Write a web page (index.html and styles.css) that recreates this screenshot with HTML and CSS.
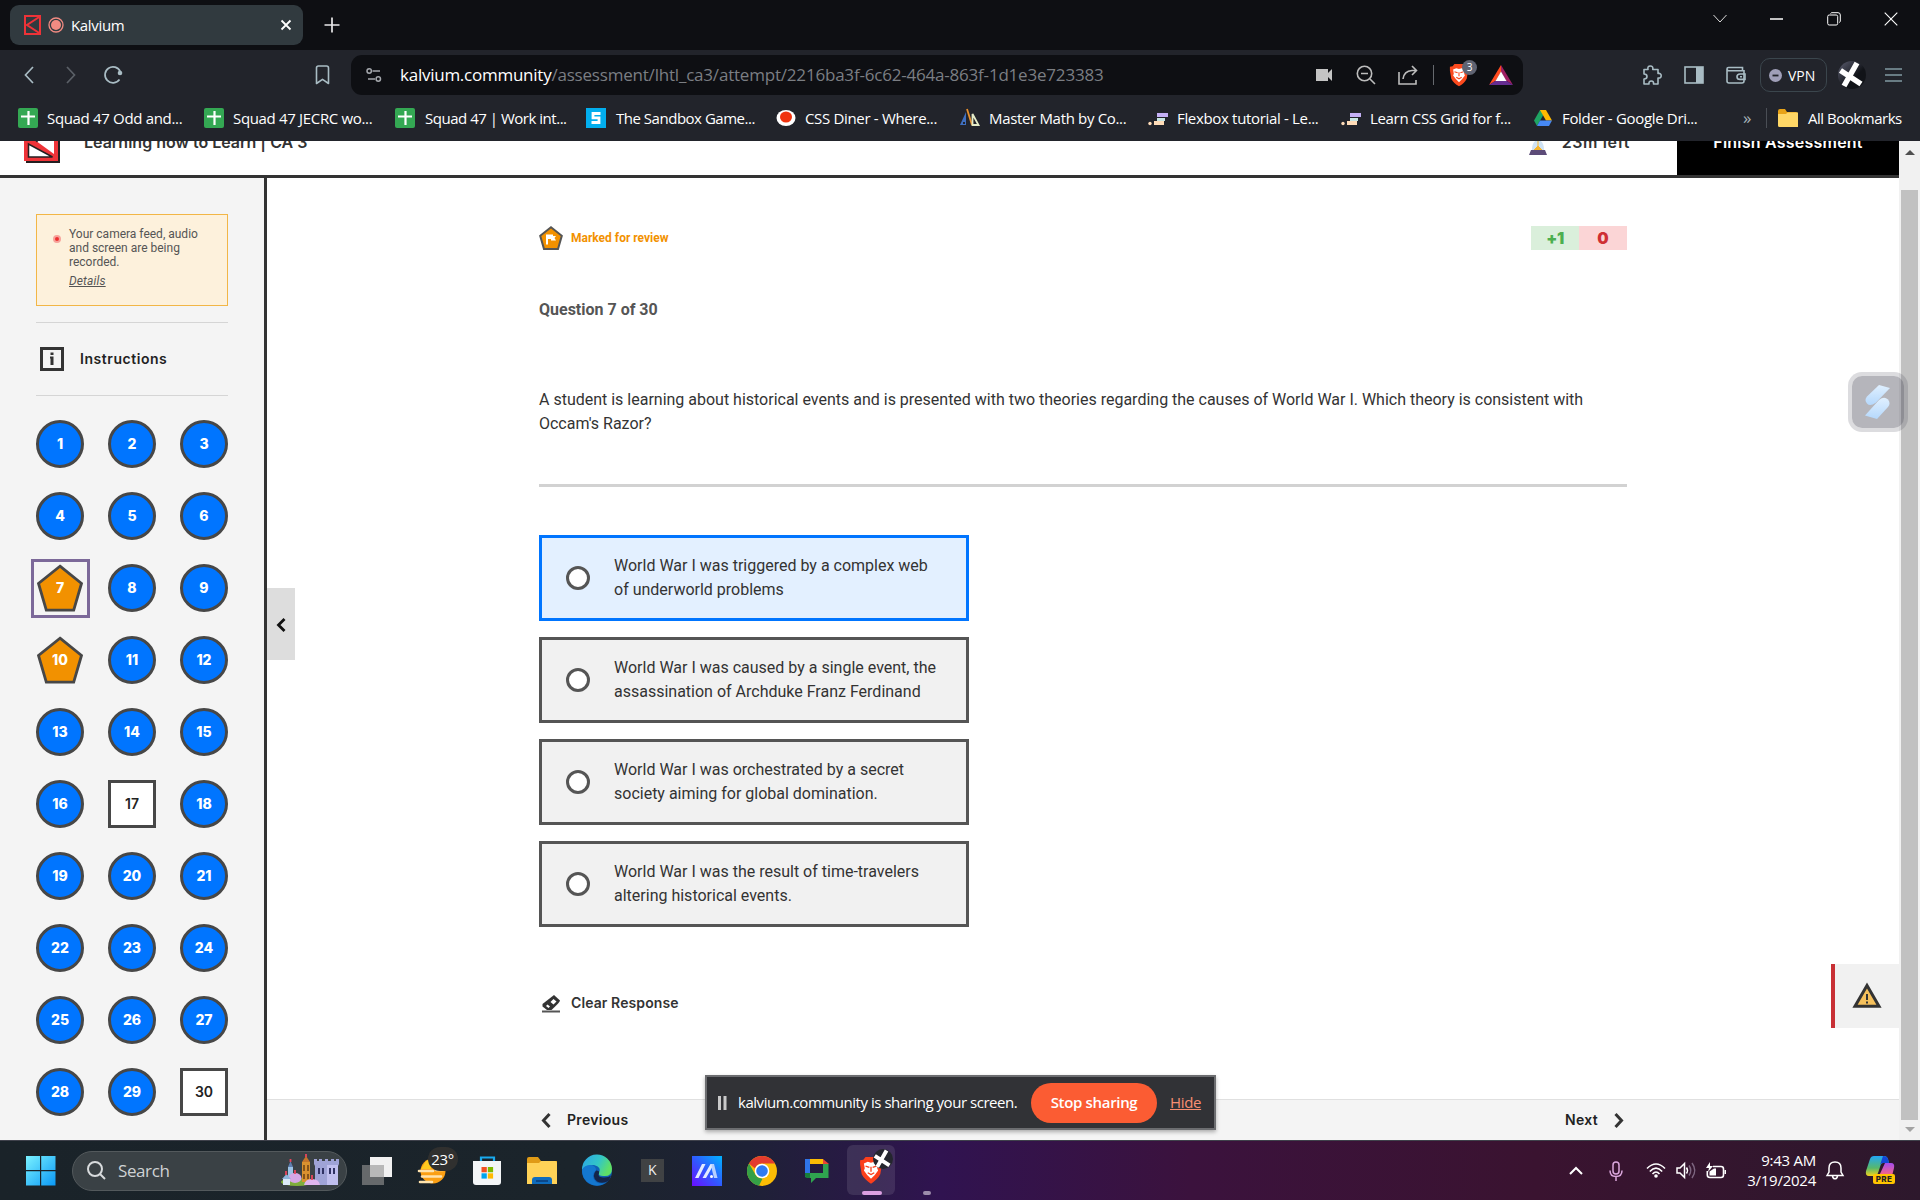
FILE: index.html
```html
<!DOCTYPE html>
<html lang="en">
<head>
<meta charset="utf-8">
<title>Kalvium</title>
<link rel="stylesheet" href="styles.css">
</head>
<body>
<div class="screen">
  <div class="tabstrip">
    <div class="tab">
      <svg class="tab-favicon" width="17" height="20" viewBox="0 0 17 20" fill="none" stroke="#ee3338" stroke-width="2"><rect x="1" y="1" width="15" height="18"/><path d="M16 1.500 3 10l13 8.500"/></svg>
      <svg class="tab-record" width="16" height="16" viewBox="0 0 16 16"><circle cx="8" cy="8" r="7" fill="none" stroke="#f28b82" stroke-width="1.300"/><circle cx="8" cy="8" r="5" fill="#f28b82"/></svg>
      <span class="tab-title">Kalvium</span>
      <svg width="12" height="12" viewBox="0 0 12 12" stroke="#fff" stroke-width="1.800"><path d="M1.500 1.500l9 9M10.500 1.500l-9 9"/></svg>
    </div>
    <svg class="new-tab" width="16" height="16" viewBox="0 0 16 16" stroke="#e8e8ea" stroke-width="1.700"><path d="M8 .5v15M.5 8h15"/></svg>
    <div class="window-controls">
      <span><svg width="14" height="9" viewBox="0 0 14 9" fill="none" stroke="#ddd"><path d="M.5 1 7 8l6.500-7"/></svg></span>
      <span><svg width="13" height="2" viewBox="0 0 13 2"><path d="M0 1h13" stroke="#fff" stroke-width="1.500"/></svg></span>
      <span><svg width="14" height="14" viewBox="0 0 14 14" fill="none" stroke="#fff"><rect x=".7" y="3" width="10" height="10" rx="1.500"/><path d="M3.500 1.500Q4 .7 5 .7h6q2.300 0 2.300 2.300v6q0 1-1 1.500"/></svg></span>
      <span><svg width="14" height="14" viewBox="0 0 14 14" stroke="#fff" stroke-width="1.100"><path d="M.7.7l12.600 12.600M13.300.7.7 13.300"/></svg></span>
    </div>
  </div>

  <div class="toolbar">
    <span class="tool"><svg width="10" height="18" viewBox="0 0 10 18" fill="none" stroke="#a9bcc4" stroke-width="1.700"><path d="M9 1 1.500 9 9 17"/></svg></span>
    <span class="tool"><svg width="10" height="18" viewBox="0 0 10 18" fill="none" stroke="#5b6067" stroke-width="1.700"><path d="M1 1l7.500 8L1 17"/></svg></span>
    <span class="tool"><svg width="20" height="20" viewBox="0 0 20 20" fill="none" stroke="#a9bcc4" stroke-width="1.700"><path d="M16.500 14.500A8 8 0 1 1 17.300 6.500"/><circle cx="17" cy="8" r="2.300" fill="#a9bcc4" stroke="none"/></svg></span>
    <span class="tool tool-bookmark"><svg width="15" height="20" viewBox="0 0 15 20" fill="none" stroke="#a9bcc4" stroke-width="1.600" stroke-linejoin="round"><path d="M1.500 3q0-2 2-2h8q2 0 2 2v15.500l-6-4.200-6 4.200z"/></svg></span>
    <div class="omnibox">
      <svg class="site-info" width="16" height="16" viewBox="0 0 16 16" fill="none" stroke="#a5a8ad" stroke-width="1.500"><circle cx="3.200" cy="4" r="2.200"/><path d="M6.500 4H14M2 12h7"/><circle cx="12.300" cy="12" r="2.200"/></svg>
      <span class="url"><b>kalvium.community</b>/assessment/lhtl_ca3/attempt/2216ba3f-6c62-464a-863f-1d1e3e723383</span>
      <span class="tool"><svg width="18" height="14" viewBox="0 0 18 14" fill="#c4c4c4"><path d="M1 1h12v4l4-4v12l-4-4v4H1z"/></svg></span>
      <span class="tool"><svg width="20" height="20" viewBox="0 0 20 20" fill="none" stroke="#bdbdbd" stroke-width="1.600"><circle cx="8.500" cy="8.500" r="7.200"/><path d="M5 8.500h7M14 14l5 5"/></svg></span>
      <span class="tool"><svg width="20" height="20" viewBox="0 0 20 20" fill="none" stroke="#bdbdbd" stroke-width="1.600"><path d="M1 7v12h17v-4M5 14q1-8 9-8.500h4M14 1l4.500 4.500L14 10"/></svg></span>
      <i class="omnibox-divider"></i>
      <span class="tool brave-tool">
        <svg width="20" height="24" viewBox="0 0 22 26"><path d="M6 1h10l2 2.500 3 .5 0 4-1.500 9Q17 22 11 25.500 5 22 2.500 17L1 8V4l3-.5z" fill="#fb4a1e"/><path d="M4.500 7l3.500-1.500 3 .8 3-.8L17.500 7l-.8 4.500.8 2-3 4-3.500 3.500-3.500-3.500-3-4 .8-2z" fill="#fff"/><path d="M6 9.500l3.500 1M16 9.500l-3.500 1M8 15.500l3 1.700 3-1.700M11 10v4.500" stroke="#fb4a1e" stroke-width="1.200" fill="none"/></svg>
        <em>3</em>
      </span>
      <span class="tool"><svg width="24" height="20" viewBox="0 0 24 20"><path d="M12 0 0 20l7-4.500L12 7z" fill="#ff4b1f"/><path d="M12 0v7l5 8.500L24 20z" fill="#9e1f63"/><path d="M0 20h24l-7-4.500H7z" fill="#662d91"/><path d="M12 6.500 6.500 16h11z" fill="#fff"/></svg></span>
    </div>
    <span class="tool tool-extensions"><svg width="20" height="20" viewBox="0 0 20 20" fill="none" stroke="#a9bcc4" stroke-width="1.600" stroke-linejoin="round"><path d="M2 4.500h4q-.8-3.500 2.300-3.500t2.500 3.500H16v4q3.200-.5 3.200 2.200T16 13v6h-4.500q.5-3-2.200-3T7 19H2v-5q3 0 3-2.500T2 9z"/></svg></span>
    <span class="tool"><svg width="20" height="18" viewBox="0 0 20 18"><rect x="1" y="1" width="18" height="16" fill="none" stroke="#a9bcc4" stroke-width="1.600"/><path d="M12 1h7v16h-7z" fill="#a9bcc4"/></svg></span>
    <span class="tool"><svg width="20" height="18" viewBox="0 0 20 18" fill="none" stroke="#a9bcc4" stroke-width="1.600"><path d="M16.500 4V1.500H2.500Q1 1.500 1 3v12q0 2 2 2h13q2 0 2-2V4.800H3Q1 4.800 1 3"/><path d="M19 8h-5q-3 0-3 2.700t3 2.700h5z"/><path d="M14 10.700h2"/></svg></span>
    <span class="vpn"><svg width="13" height="13" viewBox="0 0 13 13"><circle cx="6.500" cy="6.500" r="6.500" fill="#a09fb8"/><path d="M3.500 6.500h6" stroke="#22242b" stroke-width="1.800"/></svg>VPN</span>
    <svg class="avatar" width="28" height="28" viewBox="0 0 28 28"><defs><linearGradient id="av" x2="1" y2="1"><stop offset="0" stop-color="#5d5f72"/><stop offset=".6" stop-color="#111318"/></linearGradient></defs><circle cx="14" cy="14" r="14" fill="url(#av)"/><path d="M19 2 6 25M2.500 9.500 23 23" stroke="#fff" stroke-width="5.500"/></svg>
    <svg class="menu" width="17" height="14" viewBox="0 0 17 14" stroke="#8199a3" stroke-width="1.500"><path d="M0 1h17M0 7h17M0 13h17"/></svg>
  </div>

  <div class="bookmarks">
    <span class="bm"><svg width="20" height="20" viewBox="0 0 20 20"><rect width="20" height="20" rx="2" fill="#34a853"/><path d="M10.500 3v14M3 8.500h14" stroke="#fff" stroke-width="2.200"/></svg>Squad 47 Odd and...</span>
    <span class="bm"><svg width="20" height="20" viewBox="0 0 20 20"><rect width="20" height="20" rx="2" fill="#34a853"/><path d="M10.500 3v14M3 8.500h14" stroke="#fff" stroke-width="2.200"/></svg>Squad 47 JECRC wo...</span>
    <span class="bm bm-tight"><svg width="20" height="20" viewBox="0 0 20 20"><rect width="20" height="20" rx="2" fill="#34a853"/><path d="M10.500 3v14M3 8.500h14" stroke="#fff" stroke-width="2.200"/></svg>Squad 47 | Work int...</span>
    <span class="bm bm-tight"><svg width="20" height="20" viewBox="0 0 20 20"><path d="M0 0h20v20H0z" fill="#02aeee"/><path d="M14.500 5.500H7v4.300h6v4.700H5.500" fill="none" stroke="#fff" stroke-width="2.800"/></svg>The Sandbox Game...</span>
    <span class="bm"><svg width="20" height="20" viewBox="0 0 20 20"><ellipse cx="10" cy="10" rx="9.500" ry="8" fill="#fff"/><ellipse cx="10" cy="9" rx="6" ry="5.500" fill="#f0330f"/></svg>CSS Diner - Where...</span>
    <span class="bm"><svg width="20" height="20" viewBox="0 0 20 20"><path d="M0 17 6 4v13z" fill="#3f6fc0"/><path d="M3 14h2v2H3z" fill="#22242b"/><path d="M7 1l5 16" stroke="#e8912d" stroke-width="1.800"/><path d="M12.500 6v11h6z" fill="none" stroke="#e5ecc8" stroke-width="1.800"/></svg>Master Math by Co...</span>
    <span class="bm"><svg width="20" height="20" viewBox="0 0 20 20"><path d="M9 5h11v4H9z" fill="#c4b0f5"/><path d="M9 10h8v3H9z" fill="#c8e6e3"/><path d="M6 13h10v4H6z" fill="#ffdcb8"/><circle cx="2" cy="15.500" r="1.700" fill="#ffdcb8"/></svg>Flexbox tutorial - Le...</span>
    <span class="bm"><svg width="20" height="20" viewBox="0 0 20 20"><path d="M9 5h11v4H9z" fill="#c4b0f5"/><path d="M9 10h8v3H9z" fill="#c8e6e3"/><path d="M6 13h10v4H6z" fill="#ffdcb8"/><circle cx="2" cy="15.500" r="1.700" fill="#ffdcb8"/></svg>Learn CSS Grid for f...</span>
    <span class="bm"><svg width="20" height="20" viewBox="0 0 20 20"><path d="M7 2h6l-3 5.500L4 18 1 12.500z" fill="#1fa463"/><path d="M7 2h6l6 10.500h-6z" fill="#ffba00"/><path d="M7 12.500h12L16 18H4z" fill="#4688f4"/></svg>Folder - Google Dri...</span>
    <span class="bm-more">»</span>
    <i class="bm-divider"></i>
    <span class="bm bm-tight"><svg width="20" height="18" viewBox="0 0 20 18"><path d="M0 2q0-2 2-2h5l2 3h9q1.500 0 1.500 1.500V16H0z" fill="#e8a317"/><path d="M0 5h8l1.500-1.500H20V18H1.500Q0 18 0 16.500z" fill="#ffd766"/></svg>All Bookmarks</span>
  </div>

  <div class="viewport">
    <div class="page">
      <header class="exam-header">
        <svg class="logo" width="36" height="44" viewBox="0 0 36 44"><path d="M2 2h34v42H2z" fill="#231f20"/><path d="M0 0h34v42H0z" fill="#ee3338"/><path d="M5 5h19L5 16z" fill="#fff"/><path d="M30 4v31L8 19z" fill="#fff"/><path d="M4.500 25v13h24z" fill="#fff" stroke="#231f20" stroke-width="1.500"/><path d="M9 19.500l3-2 5 1-4 5z" fill="#231f20"/></svg>
        <h1>Learning how to Learn | CA 3</h1>
        <div class="timer">
          <svg width="18" height="28" viewBox="0 0 18 28"><path d="M3 4h12q0 7-4 9.500 4 2 4 9.500H3q0-7.500 4-9.500Q3 11 3 4z" fill="#cfe3f5"/><path d="M9 13v6l4 4H5l4-4" fill="#f5b52e" stroke="#f5b52e"/><path d="M2 0h14v3H2zM2 23h14l2 5H0z" fill="#5c4b78"/></svg>
          23m left
        </div>
        <div class="finish">Finish Assessment</div>
      </header>
      <div class="exam-body">
        <aside class="sidebar">
          <div class="notice">
            <i class="rec-dot"></i>
            <div>Your camera feed, audio and screen are being recorded.<a>Details</a></div>
          </div>
          <div class="instructions">
            <svg width="24" height="24" viewBox="0 0 24 24"><rect x="1.500" y="1.500" width="21" height="21" fill="none" stroke="#333" stroke-width="3"/><path d="M10.500 5.500h3V8h-3zM10 9.500h3.500V18h-3v-6.500H10z" fill="#333"/></svg>
            <span>Instructions</span>
          </div>
          <div class="numbers">
            <span class="n">1</span><span class="n">2</span><span class="n">3</span>
            <span class="n">4</span><span class="n">5</span><span class="n">6</span>
            <span class="n flagged current"><svg width="48" height="48" viewBox="0 0 48 48"><path d="M24 2.200 45.500 19.500 37.700 46.200H10.300L2.500 19.500z" fill="#f29100" stroke="#474747" stroke-width="2.800"/></svg><b>7</b></span><span class="n">8</span><span class="n">9</span>
            <span class="n flagged"><svg width="48" height="48" viewBox="0 0 48 48"><path d="M24 2.200 45.500 19.500 37.700 46.200H10.300L2.500 19.500z" fill="#f29100" stroke="#474747" stroke-width="2.800"/></svg><b>10</b></span><span class="n">11</span><span class="n">12</span>
            <span class="n">13</span><span class="n">14</span><span class="n">15</span>
            <span class="n">16</span><span class="n open">17</span><span class="n">18</span>
            <span class="n">19</span><span class="n">20</span><span class="n">21</span>
            <span class="n">22</span><span class="n">23</span><span class="n">24</span>
            <span class="n">25</span><span class="n">26</span><span class="n">27</span>
            <span class="n">28</span><span class="n">29</span><span class="n open">30</span>
          </div>
        </aside>
        <main class="main">
          <div class="collapse"><svg width="10" height="14" viewBox="0 0 10 14" fill="none" stroke="#111" stroke-width="2.800"><path d="M8.500 1 2.500 7l6 6"/></svg></div>
          <section class="question">
            <div class="status">
              <svg width="24" height="24" viewBox="0 0 24 24"><path d="M12 1.200 22.800 9.800 19 23H5L1.200 9.800z" fill="#f29100" stroke="#555" stroke-width="2"/><path d="M7 8.500h7v1.500h3l-1.500 2 1.500 2.500h-5V13H9v5.500H7z" fill="#fff"/></svg>
              <span>Marked for review</span>
              <div class="score"><b>+1</b><b>0</b></div>
            </div>
            <h2>Question 7 of 30</h2>
            <p>A student is learning about historical events and is presented with two theories regarding the causes of World War I. Which theory is consistent with<br>Occam's Razor?</p>
            <div class="options">
              <div class="option selected"><i></i><span>World War I was triggered by a complex web<br>of underworld problems</span></div>
              <div class="option"><i></i><span>World War I was caused by a single event, the<br>assassination of Archduke Franz Ferdinand</span></div>
              <div class="option"><i></i><span>World War I was orchestrated by a secret<br>society aiming for global domination.</span></div>
              <div class="option"><i></i><span>World War I was the result of time-travelers<br>altering historical events.</span></div>
            </div>
            <div class="clear">
              <svg width="19" height="18" viewBox="0 0 19 18"><path d="M0 15.500h18V17.500H0z" fill="#555"/><path d="M12 0l6 5.500Q18 7 9.500 15H5L.5 11.500V9z" fill="#333"/><path d="M11.500 4l3 2.500-3 3-3-2.500z" fill="#fff"/><path d="M5.500 9.500l2.500 2-1.500 1.500L4 11z" fill="#fff"/></svg>
              <span>Clear Response</span>
            </div>
          </section>
          <footer class="pager">
            <div class="prev"><svg width="10" height="15" viewBox="0 0 10 15" fill="none" stroke="#333" stroke-width="3"><path d="M8.500 1 2.500 7.500l6 6.500"/></svg><span>Previous</span></div>
            <div class="next"><span>Next</span><svg width="10" height="15" viewBox="0 0 10 15" fill="none" stroke="#333" stroke-width="3"><path d="M1.500 1l6 6.500-6 6.500"/></svg></div>
          </footer>
          <div class="warning"><svg width="30" height="26" viewBox="0 0 30 26"><path d="M15 3.500 27 24.300H3z" fill="#f6c15c" stroke="#333" stroke-width="3"/><path d="M15 12v6M15 19.500v2" stroke="#333" stroke-width="2"/></svg></div>
        </main>
      </div>
    </div>
    <div class="scrollbar">
      <svg width="10" height="5" viewBox="0 0 10 5"><path d="M0 5 5 0l5 5z" fill="#505050"/></svg>
      <div class="thumb"></div>
      <svg width="10" height="5" viewBox="0 0 10 5"><path d="M0 0l5 5 5-5z" fill="#a3a3a3"/></svg>
    </div>
    <div class="assist"><svg width="26" height="34" viewBox="0 0 26 34"><defs><linearGradient id="as" x2="0" y2="1"><stop offset="0" stop-color="#e0f0ff"/><stop offset="1" stop-color="#b5d8fc"/></linearGradient></defs><path d="M14 0l11 3L11 17.500Q5 22 2 18.500-1 15 2 11.500z" fill="url(#as)"/><path d="M0 30.500l14-15.500q5-4 9-.5 3 4 0 7.500L12 34z" fill="url(#as)"/></svg></div>
    <div class="share-bar">
      <svg width="9" height="14" viewBox="0 0 9 14" fill="#c9c9ca"><path d="M0 0h3v14H0zM5.500 0h3v14h-3z"/></svg>
      <span class="share-text">kalvium.community is sharing your screen.</span>
      <span class="stop">Stop sharing</span>
      <a>Hide</a>
    </div>
  </div>

  <div class="taskbar">
    <svg class="start" width="30" height="30" viewBox="0 0 30 30"><defs><linearGradient id="st" x2="1" y2="1"><stop offset="0" stop-color="#7af2ff"/><stop offset="1" stop-color="#0a98f5"/></linearGradient></defs><path d="M0 0h14v14H0zM15.200 0H29.500v14H15.200zM0 15.200h14v14.300H0zM15.200 15.200H29.500v14.300H15.200z" fill="url(#st)"/></svg>
    <div class="search">
      <svg width="19" height="19" viewBox="0 0 19 19" fill="none" stroke="#d8dbdd" stroke-width="2"><circle cx="8" cy="8" r="7"/><path d="M13 13l5 5"/></svg>
      <span>Search</span>
      <svg class="castle" width="60" height="34" viewBox="0 0 60 34"><ellipse cx="17" cy="28" rx="16" ry="4" fill="#7fae3c"/><path d="M8 13h5v14H8z" fill="#9cc3e6"/><path d="M8 13l2.500-6 2.500 6z" fill="#5f7fb0"/><path d="M22 8h8v20h-8z" fill="#d9912f"/><path d="M22 8l4-6 4 6z" fill="#c4742a"/><path d="M24 11v6M28 11v6M24 20v5M28 20v5" stroke="#5a3510" stroke-width="1.300"/><ellipse cx="15" cy="24" rx="6.500" ry="5" fill="#d5a7e6"/><path d="M3 24h7v7H3z" fill="#dbe9f8"/><path d="M2 25l4.500-5 4.500 5z" fill="#8eb4da"/><path d="M34 5h3v2h2V5h3v2h3V5h3v2h3V5h3v2h2V5h3v5l-1 2v19H35V12l-1-2z" fill="#9fa3d6"/><path d="M47 11h11v20H47z" fill="#c0bfee"/><path d="M38 14h2v6h-2zM42 14h2v6h-2zM49 14h2v6h-2zM53 14h2v6h-2z" fill="#303263"/><path d="M24 31q1-6 8-6t8 6z" fill="#e0b5ee"/><path d="M10.500 5v3M26 0v3M15 16v4M32 21v5M6 17v4" stroke="#e8455c" stroke-width="1.800"/></svg>
    </div>
    <div class="apps">
      <span class="app"><svg width="30" height="28" viewBox="0 0 30 28"><path d="M0 8h22v20H0z" fill="#66696b"/><path d="M8 0h22v20H8z" fill="#f1f1f1"/><path d="M8 8h14v12H8z" fill="#b8b8b8"/></svg></span>
      <span class="app weather"><svg width="28" height="28" viewBox="0 0 28 28"><circle cx="15" cy="14" r="12.500" fill="#fb9f13"/><path d="M8 4Q15 0 21 5L12 12H3z" fill="#ffc91f"/><path d="M1 14h14M4 19.500h19M2 25h12M18 13h7" stroke="#ffe3ad" stroke-width="2.600" stroke-linecap="round"/></svg><em>23°</em></span>
      <span class="app"><svg width="30" height="30" viewBox="0 0 30 30"><path d="M9 6V1.500h13V6" fill="none" stroke="#19a9ed" stroke-width="2.200"/><path d="M1 5h28v21q0 3-3 3H4q-3 0-3-3z" fill="#f3f5f7"/><path d="M9.500 11h5.300v5.300H9.500z" fill="#f25022"/><path d="M15.800 11h5.300v5.300h-5.300z" fill="#7fba00"/><path d="M9.500 17.300h5.300v5.300H9.500z" fill="#00a4ef"/><path d="M15.800 17.300h5.300v5.300h-5.300z" fill="#ffb900"/></svg></span>
      <span class="app"><svg width="30" height="28" viewBox="0 0 30 28"><path d="M0 2q0-2 2-2h9l3 4h16v6H0z" fill="#e09b16"/><path d="M0 6h12l2-2h14q2 0 2 2v21H0z" fill="#ffd257"/><path d="M5 27v-4q0-3 3-3h14q3 0 3 3v4z" fill="#0f6cbd"/><path d="M9 24h12" stroke="#0a3f7c" stroke-width="1.600"/></svg></span>
      <span class="app"><svg width="30" height="30" viewBox="0 0 30 30"><defs><linearGradient id="ed" x2="1" y2=".4"><stop offset="0" stop-color="#2aa3e8"/><stop offset=".6" stop-color="#33c6c6"/><stop offset="1" stop-color="#5fe066"/></linearGradient></defs><circle cx="15" cy="15" r="15" fill="#0f5fb4"/><path d="M0 14A15 15 0 0 1 30 13q0 8-9 7-5 0-4-3 3-6-5-8Q4 9 0 14z" fill="url(#ed)"/><path d="M17 17q-2 4 4 4.500 5 .5 8-2l-2 5q-6 4-12 1-6-5-1-11 4 0 3 2.500z" fill="#14254a"/><path d="M0 14q2-5 9-5 5 1 5 5-6 6 0 12 5 3 11 0Q15 33 5 26 0 21 0 14z" fill="#1477cf"/></svg></span>
      <span class="app"><i class="k-app">K</i></span>
      <span class="app"><svg width="30" height="30" viewBox="0 0 30 30"><defs><linearGradient id="my" x1="0" y1="1" x2="1" y2="0"><stop offset="0" stop-color="#6a0dff"/><stop offset=".5" stop-color="#2f5bff"/><stop offset="1" stop-color="#00b4ff"/></linearGradient></defs><path d="M0 0h30v30H0z" fill="url(#my)"/><path d="M3 22 10 8h3.500l-7 14zM10.500 22l8-14H22l-8 14z" fill="#e3ebff"/><path d="M19.500 8H22l3.500 14H22l-2-8z" fill="#b7d0ff"/><circle cx="19.500" cy="20.500" r="1.500" fill="#fff"/></svg></span>
      <span class="app"><svg width="30" height="30" viewBox="0 0 30 30"><circle cx="15" cy="15" r="15" fill="#fbbc05"/><path d="M2 7.500A15 15 0 0 1 28 7.500H15q-5 0-7 5z" fill="#e33b2e"/><path d="M2 7.500 8.600 19q2 3.500 7 3.500L12 29.800A15 15 0 0 1 2 7.500z" fill="#34a046"/><circle cx="15" cy="15" r="7.300" fill="#fff"/><circle cx="15" cy="15" r="5.800" fill="#2f7af0"/></svg></span>
      <span class="app"><svg width="24" height="24" viewBox="0 0 24 24"><path d="M0 0h5v18H0z" fill="#2f74e8"/><path d="M5 0h13v5H5z" fill="#fbbc04"/><path d="M18 0l6 5h-6z" fill="#ea4335"/><path d="M18 5h5.500v14H11l-5 5v-5H5v-5h13z" fill="#2fa34f"/><path d="M0 14h5v5H2q-2 0-2-2z" fill="#188038"/></svg></span>
      <span class="app active"><svg width="24" height="30" viewBox="0 0 22 26"><path d="M6 1h10l2 2.500 3 .5 0 4-1.500 9Q17 22 11 25.500 5 22 2.500 17L1 8V4l3-.5z" fill="#fb3f1c"/><path d="M4.500 7l3.500-1.500 3 .8 3-.8L17.500 7l-.8 4.500.8 2-3 4-3.500 3.500-3.500-3.500-3-4 .8-2z" fill="#fff"/><path d="M6 9.500l3.500 1M16 9.500l-3.500 1M8 15.500l3 1.700 3-1.700M11 10v4.500" stroke="#fb3f1c" stroke-width="1.200" fill="none"/></svg>
        <svg class="profile-badge" width="20" height="20" viewBox="0 0 28 28"><circle cx="14" cy="14" r="14" fill="#24262e"/><path d="M19 2 6 25M2.500 9.500 23 23" stroke="#fff" stroke-width="5.500"/></svg></span>
      <span class="app background"></span>
    </div>
    <div class="tray">
      <span class="t-caret"><svg width="14" height="9" viewBox="0 0 14 9" fill="none" stroke="#fff" stroke-width="2"><path d="M1 8l6-6 6 6"/></svg></span>
      <span class="t-mic"><svg width="14" height="20" viewBox="0 0 14 20" fill="none" stroke="#dba6dc" stroke-width="1.500"><rect x="4" y="1" width="6" height="12" rx="3"/><path d="M1 9.500q0 6 6 6t6-6M7 15.500V20"/></svg></span>
      <span class="t-wifi"><svg width="20" height="15" viewBox="0 0 20 15" fill="none" stroke="#fff" stroke-width="1.600"><path d="M1 5.500Q10-3.500 19 5.500M3.800 8.500Q10 1.800 16.200 8.500M6.500 11Q10 7 13.500 11"/><circle cx="10" cy="13" r="1.800" fill="#fff" stroke="none"/></svg></span>
      <span class="t-sound"><svg width="20" height="17" viewBox="0 0 20 17" fill="none" stroke="#fff" stroke-width="1.500"><path d="M1 6h3l4.500-4.500v14L4 11H1zM10.500 5.500q2 3 0 6"/><path d="M13 3.500q3.500 5 0 10M16 1q5.500 7.500 0 15" stroke="#7d6680"/></svg></span>
      <span class="t-battery"><svg width="20" height="17" viewBox="0 0 20 17"><path d="M7 4.500h8q2.500 0 2.500 2.500v6q0 2.500-2.500 2.500H4Q1.300 15.500 1.300 13V9" fill="none" stroke="#fff" stroke-width="1.600"/><path d="M18.500 8H20v4h-1.500zM3.500 9.500 8 6.500h2v7H3.500zM4 0 0 6h3L2 10l5-6H4z" fill="#fff"/></svg></span>
      <div class="clock">9:43 AM<br>3/19/2024</div>
      <span class="t-bell"><svg width="18" height="19" viewBox="0 0 18 19" fill="none" stroke="#fff" stroke-width="1.500"><path d="M1 14.500 3 11V7q0-6 6-6t6 6v4l2 3.500zM6.500 15q.5 2.800 2.500 2.800t2.500-2.800"/></svg></span>
      <span class="t-copilot"><svg width="29" height="28" viewBox="0 0 29 28"><defs><linearGradient id="c1" x2="0" y2="1"><stop offset="0" stop-color="#22a8f5"/><stop offset=".6" stop-color="#57b86b"/><stop offset="1" stop-color="#f2d21c"/></linearGradient><linearGradient id="c2" x2="0" y2="1"><stop offset="0" stop-color="#a44bf0"/><stop offset="1" stop-color="#ff6a7a"/></linearGradient></defs><path d="M4 3Q5 0 8 0h10q3 0 4 3l1 4h-6q-2 0-3 4l-2 6q-1 3-4 3H3q-4 0-3-5z" fill="url(#c1)"/><path d="M17 0q4 0 5 3l1 4h-6q-2 0-3 2z" fill="#1246d6"/><path d="M19 7h6q4 0 3 5l-2 8H13z" fill="url(#c2)"/></svg><em>PRE</em></span>
    </div>
  </div>
</div>
</body>
</html>
```
FILE: styles.css
```css
* { box-sizing: border-box; }
body { margin: 0; background: #0e0f13; }
svg { display: block; flex: none; overflow: visible; }
em, i { font-style: normal; }

.screen {
  width: 1920px;
  height: 1200px;
  display: flex;
  flex-direction: column;
  overflow: hidden;
  font-family: "Open Sans", "Noto Sans", sans-serif;
  font-size: 15px;
  letter-spacing: -0.33px;
  color: #fff;
  white-space: nowrap;
}

/* Browser chrome */
.tabstrip { height: 50px; background: #0e0f13; display: flex; align-items: flex-start; padding: 5px 0 0 10px; flex: none; }
.tab { width: 293px; height: 40px; background: #313a3f; border-radius: 9px; display: flex; align-items: center; padding: 0 11px 0 14px; }
.tab-record { margin-left: 7px; }
.tab-title { margin: 0 0 1px 7px; flex: 1; }
.new-tab { margin: 12px 0 0 21px; }
.window-controls { margin-left: auto; display: flex; padding-right: 1px; }
.window-controls span { width: 57px; height: 27px; display: flex; align-items: center; justify-content: center; }

.toolbar { height: 50px; background: #22242b; display: flex; align-items: center; padding-left: 8px; flex: none; }
.tool { width: 42px; height: 40px; display: flex; align-items: center; justify-content: center; flex: none; }
.tool-bookmark { margin-left: 167px; }
.omnibox { width: 1172px; height: 40px; margin-left: 8px; background: #0e0f13; border-radius: 11px; display: flex; align-items: center; padding: 0 1px 0 15px; }
.url { margin: 0 0 2px 18px; font-size: 17px; color: #7b7e83; flex: 1; letter-spacing: -0.2px; }
.url b { color: #fff; font-weight: 400; letter-spacing: -0.25px; }
.omnibox-divider { width: 1px; height: 20px; background: #66696e; margin: 0 4px; }
.brave-tool { position: relative; }
.brave-tool em { position: absolute; left: 24px; top: 5px; width: 15px; height: 15px; border-radius: 50%; background: #5f6372; font-size: 10px; line-height: 15px; text-align: center; }
.tool-extensions { margin-left: 108px; }
.vpn { width: 67px; height: 34px; margin-left: 3px; border: 1.500px solid #3b464d; border-radius: 10px; display: flex; align-items: center; padding-left: 8px; gap: 6px; font-size: 14px; letter-spacing: 0; }
.avatar { margin-left: 11px; }
.menu { margin-left: 19px; }

.bookmarks { height: 41px; background: #22242b; display: grid; grid-template-columns: 186px 191px 191px 190px 184px 188px 193px 192px 210px 23px 12px auto; align-items: center; padding: 0 0 6px 18px; flex: none; }
.bm { display: flex; align-items: center; gap: 9px; }
.bm-tight { letter-spacing: -0.48px; gap: 10px; }
.bm-more { color: #a9b5ba; font-size: 17px; }
.bm-divider { width: 1px; height: 20px; background: #4a4e55; }

/* Page viewport */
.viewport { height: 999px; display: flex; position: relative; background: #fff; flex: none; }
.page { width: 1899px; display: flex; flex-direction: column; color: #333; font-family: Roboto, sans-serif; letter-spacing: 0; }
.exam-header { height: 37px; border-bottom: 3px solid #333; overflow: hidden; display: flex; align-items: flex-start; padding-left: 24px; font: 600 16px/20px Inter, sans-serif; flex: none; }
.logo { margin-top: -22px; }
.exam-header h1 { margin: -9px 0 0 24px; font: inherit; }
.timer { display: flex; gap: 15px; margin: -9px 0 0 auto; letter-spacing: .6px; }
.timer svg { margin-top: -5px; }
.finish { width: 222px; height: 56px; margin: -22px 0 0 47px; background: #000; color: #fff; text-align: center; padding-top: 13px; letter-spacing: .22px; }
.exam-body { flex: 1; display: flex; }

.sidebar { width: 267px; background: #f4f4f4; border-right: 3px solid #333; padding: 36px 36px 0; flex: none; }
.notice { height: 92px; border: 1px solid #f2b646; background: #fdf1dc; display: flex; gap: 8px; padding: 12px 16px; font-size: 12px; line-height: 14px; color: #555; white-space: normal; }
.notice a { display: block; margin-top: 5px; font-style: italic; text-decoration: underline; letter-spacing: .15px; }
.rec-dot { width: 8px; height: 8px; border-radius: 50%; background: #ee2f2f; border: 2px solid #f7a39b; margin-top: 8px; flex: none; }
.instructions { margin-top: 16px; height: 74px; border: solid #d5d5d5; border-width: 1px 0; display: flex; align-items: center; gap: 16px; padding-left: 4px; font: 600 14px Inter, sans-serif; letter-spacing: .55px; color: #222; }
.instructions span { margin-bottom: 2px; }
.numbers { margin-top: 24px; display: grid; grid-template-columns: repeat(3, 48px); gap: 24px; }
.n { height: 48px; border: 3px solid #474747; border-radius: 50%; background: #0075ff; color: #fff; display: flex; align-items: center; justify-content: center; padding-bottom: 2px; font: 800 14px Inter, sans-serif; }
.n.open { border-radius: 0; background: #fff; color: #222; font-weight: 600; }
.n.flagged { border: 0; border-radius: 0; background: none; position: relative; }
.n.flagged svg { position: absolute; inset: 0; }
.n.flagged b { position: relative; font-weight: 800; }
.n.current::after { content: ""; position: absolute; inset: -5px -6px -6px -5px; border: 3px solid #7c6999; }

.main { flex: 1; display: flex; flex-direction: column; position: relative; }
.collapse { position: absolute; left: 0; top: 410px; width: 28px; height: 72px; background: #ddd; display: flex; align-items: center; justify-content: center; padding: 1px 1px 0 0; }
.question { flex: 1; width: 1088px; margin-left: 272px; padding-top: 48px; }
.status { height: 24px; display: flex; align-items: center; gap: 8px; color: #f29100; font-size: 12px; font-weight: 700; }
.score { margin-left: auto; display: flex; font: 700 16px/24px Inter, sans-serif; text-align: center; }
.score b { width: 48px; background: #daefdb; color: #4caf50; letter-spacing: -.5px; }
.score b + b { background: #fbd5d6; color: #cf2f34; letter-spacing: 0; }
.question h2 { margin: 48px 0 0; font-size: 16px; line-height: 24px; font-weight: 700; color: #555; }
.question p { margin: 66px 0 0; padding-bottom: 48px; border-bottom: 3px solid #d2d2d2; font-size: 16px; line-height: 24px; letter-spacing: -.005px; }
.options { margin-top: 48px; width: 430px; display: flex; flex-direction: column; gap: 16px; }
.option { height: 86px; border: 3px solid #555; background: #f1f1f1; display: flex; align-items: center; padding-left: 24px; gap: 24px; font-size: 16px; line-height: 24px; }
.option i { width: 24px; height: 24px; border: 3px solid #555; border-radius: 50%; background: #fff; flex: none; }
.option.selected { border-color: #0075ff; background: #e3f0ff; }
.clear { margin-top: 67px; padding-left: 3px; display: flex; align-items: center; gap: 10px; font: 600 14px/17px Inter, sans-serif; letter-spacing: .1px; }
.clear span { margin-bottom: 2px; }
.pager { height: 41px; background: #f4f4f4; border-top: 1px solid #e0e0e0; display: flex; align-items: center; justify-content: space-between; padding: 0 275px 0 274px; font: 600 14px Inter, sans-serif; letter-spacing: .3px; color: #222; }
.pager span { margin-bottom: 2px; }
.prev, .next { display: flex; align-items: center; gap: 16px; }
.warning { position: absolute; right: 0; top: 786px; width: 68px; height: 64px; background: #f1f1f1; border-left: 4px solid #c83035; display: flex; align-items: center; justify-content: center; padding-bottom: 3px; }

.scrollbar { width: 21px; background: #f1f1f1; display: flex; flex-direction: column; align-items: center; padding: 9px 0 8px; }
.thumb { width: 17px; margin: 35px 0 7px; flex: 1; background: #c1c1c1; }

.assist { position: absolute; left: 1848px; top: 231px; width: 60px; height: 60px; border-radius: 14px; border: 4px solid rgba(60,60,80,.18); background: rgba(60,60,75,.38) padding-box; display: flex; align-items: center; justify-content: center; }

.share-bar { position: absolute; left: 705px; top: 934px; width: 511px; height: 55px; background: #313236; border: 2px solid #6c6d70; box-shadow: 0 2px 4px rgba(0,0,0,.3); display: flex; align-items: center; padding-left: 11px; }
.share-text { margin: 0 0 2px 11px; width: 293px; letter-spacing: -.46px; }
.stop { width: 126px; height: 40px; border-radius: 20px; background: #fb5c33; font-weight: 600; text-align: center; line-height: 39px; }
.share-bar a { margin: 0 0 2px 13px; color: #f98f73; text-decoration: underline; }

/* Taskbar */
.taskbar { height: 60px; border-top: 1px solid #3f414b; background: linear-gradient(90deg, #1a2329, #1b242b 30%, #1e2136 39%, #301350 49%, #3b123d 62%, #3a1330 80%, #2d182c); display: flex; align-items: center; flex: none; }
.start { margin-left: 26px; }
.search { width: 275px; height: 40px; margin-left: 16px; border: 1px solid #53595c; border-radius: 20px; background: #3a4145; display: flex; align-items: center; padding-left: 14px; font-size: 17px; letter-spacing: -.4px; color: #cfd2d4; }
.search span { margin-left: 12px; flex: 1; }
.castle { margin: 0 6px 0 0; }
.apps { display: flex; margin-left: 2.500px; }
.app { width: 55px; height: 59px; display: flex; align-items: center; justify-content: center; position: relative; }
.weather em { position: absolute; left: 23px; top: 6px; width: 30px; height: 24px; border-radius: 12px; background: #30302f; font-size: 15px; line-height: 24px; text-align: center; }
.k-app { width: 23px; height: 23px; background: #404244; color: #eee; text-align: center; line-height: 22px; font-size: 14px; }
.active { margin: 4px 5px 4px 2px; width: 48px; height: 50px; border-radius: 6px; background: rgba(255,255,255,.1); }
.active::after, .background::after { content: ""; position: absolute; left: 15px; bottom: 0; width: 20px; height: 4px; border-radius: 2px; background: #dc9fe2; }
.profile-badge { position: absolute; left: 26px; top: 4px; }
.background::after { left: 23px; bottom: 5px; width: 8px; background: #9c8cab; }
.tray { margin-left: auto; height: 59px; display: flex; align-items: center; }
.tray span { display: flex; align-items: center; justify-content: center; flex: none; }
.t-caret { width: 40px; }
.t-mic { width: 40px; }
.t-wifi { width: 40px; }
.t-sound { width: 20px; }
.t-battery { width: 40px; }
.clock { width: 80px; text-align: right; line-height: 20px; padding-bottom: 2px; letter-spacing: -.25px; }
.t-bell { width: 38px; }
.tray .t-copilot { width: 29px; margin: 0 25px 0 12px; padding-bottom: 2px; position: relative; }
.t-copilot em { position: absolute; left: 7px; top: 18px; width: 22px; height: 10px; border-radius: 2px; background: #ffc400; color: #222; font: 800 8px/10px Inter, sans-serif; letter-spacing: .3px; text-align: center; }
```
